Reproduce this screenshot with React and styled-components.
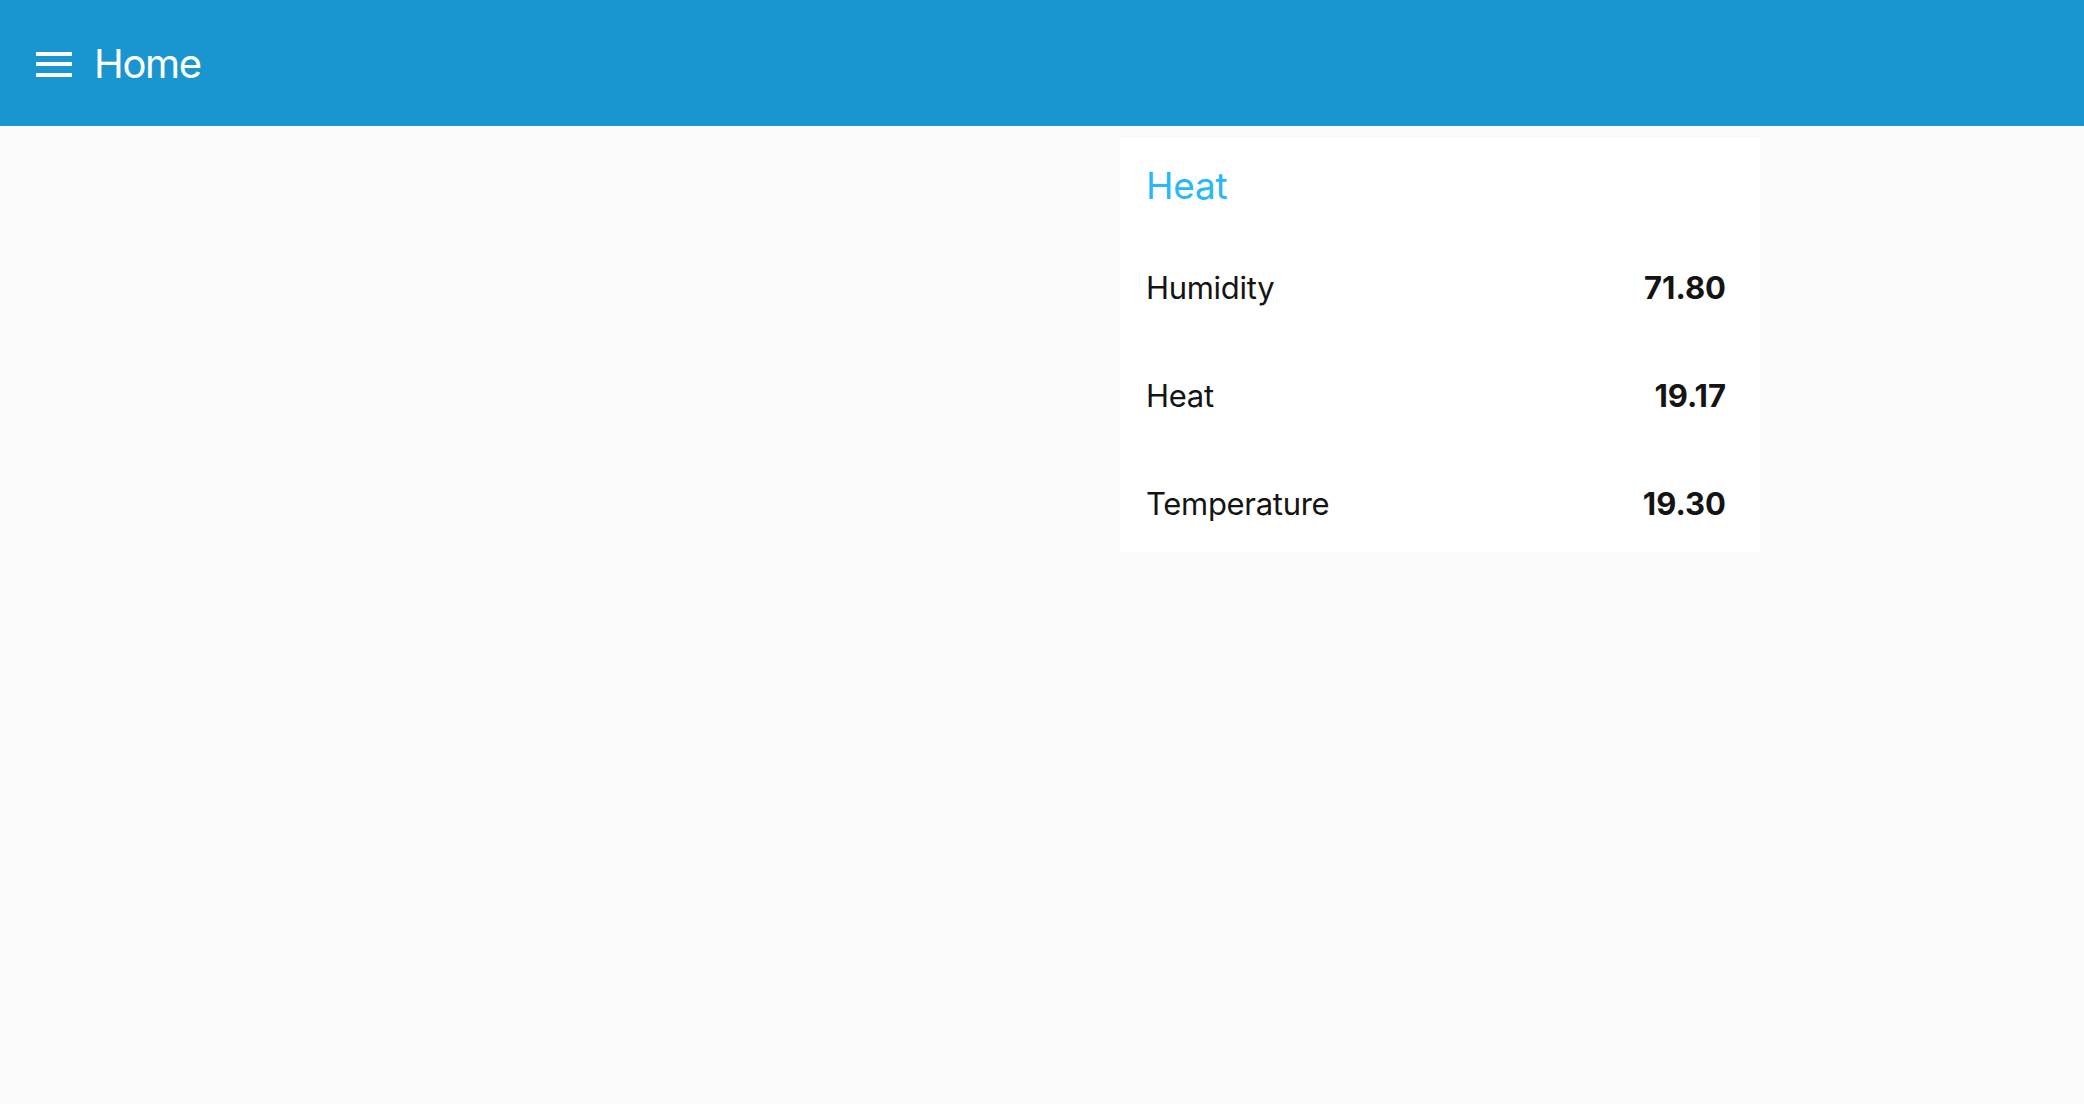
import React from 'react'
import styled, { createGlobalStyle } from 'styled-components'

const GlobalStyle = createGlobalStyle`
  html, body {
    margin: 0;
    padding: 0;
    background: #fafafa;
    font-family: Inter, "Noto Sans", sans-serif;
  }
`

const Page = styled.div`
  min-height: 1104px;
  background: #fafafa;
`

const Toolbar = styled.header`
  height: 126px;
  background: #1995cf;
  display: flex;
  align-items: center;
  padding-left: 36px;
  gap: 22px;
  color: #fff;
`

const MenuButton = styled.button`
  width: 36px;
  height: 25px;
  padding: 0;
  border: 0;
  background: none;
  display: flex;
  flex-direction: column;
  justify-content: space-between;
  cursor: pointer;
  margin-top: 2px;
`

const MenuLine = styled.span`
  display: block;
  height: 4px;
  background: #fff;
`

const Title = styled.div`
  font-size: 40px;
  letter-spacing: -1.3px;
  line-height: 48px;
  margin-top: 2px;
`

const Content = styled.main`
  display: flex;
  justify-content: flex-start;
  padding: 12px 0 0 1120px;
`

const Card = styled.section`
  width: 640px;
  background: #fff;
  padding: 24px 34px 28px 26px;
  box-sizing: border-box;
`

const CardTitle = styled.h2`
  margin: 0 0 58px;
  font-size: 37px;
  line-height: 48px;
  font-weight: 400;
  color: #29b8f7;
  letter-spacing: -0.2px;
`

const Rows = styled.div`
  display: flex;
  flex-direction: column;
  gap: 68px;
`

const Row = styled.div`
  display: flex;
  justify-content: space-between;
  align-items: center;
  height: 40px;
  font-size: 31px;
  line-height: 40px;
  color: #141414;
  letter-spacing: -0.3px;
`

const Value = styled.span`
  font-weight: 700;
  letter-spacing: 0;
`

const rows = [
  { name: 'Humidity', value: '71.80' },
  { name: 'Heat', value: '19.17' },
  { name: 'Temperature', value: '19.30' },
]

export default function App() {
  return (
    <Page>
      <GlobalStyle />
      <Toolbar>
        <MenuButton aria-label="menu">
          <MenuLine />
          <MenuLine />
          <MenuLine />
        </MenuButton>
        <Title>Home</Title>
      </Toolbar>
      <Content>
        <Card>
          <CardTitle>Heat</CardTitle>
          <Rows>
            {rows.map(r => (
              <Row key={r.name}>
                <span>{r.name}</span>
                <Value>{r.value}</Value>
              </Row>
            ))}
          </Rows>
        </Card>
      </Content>
    </Page>
  )
}
